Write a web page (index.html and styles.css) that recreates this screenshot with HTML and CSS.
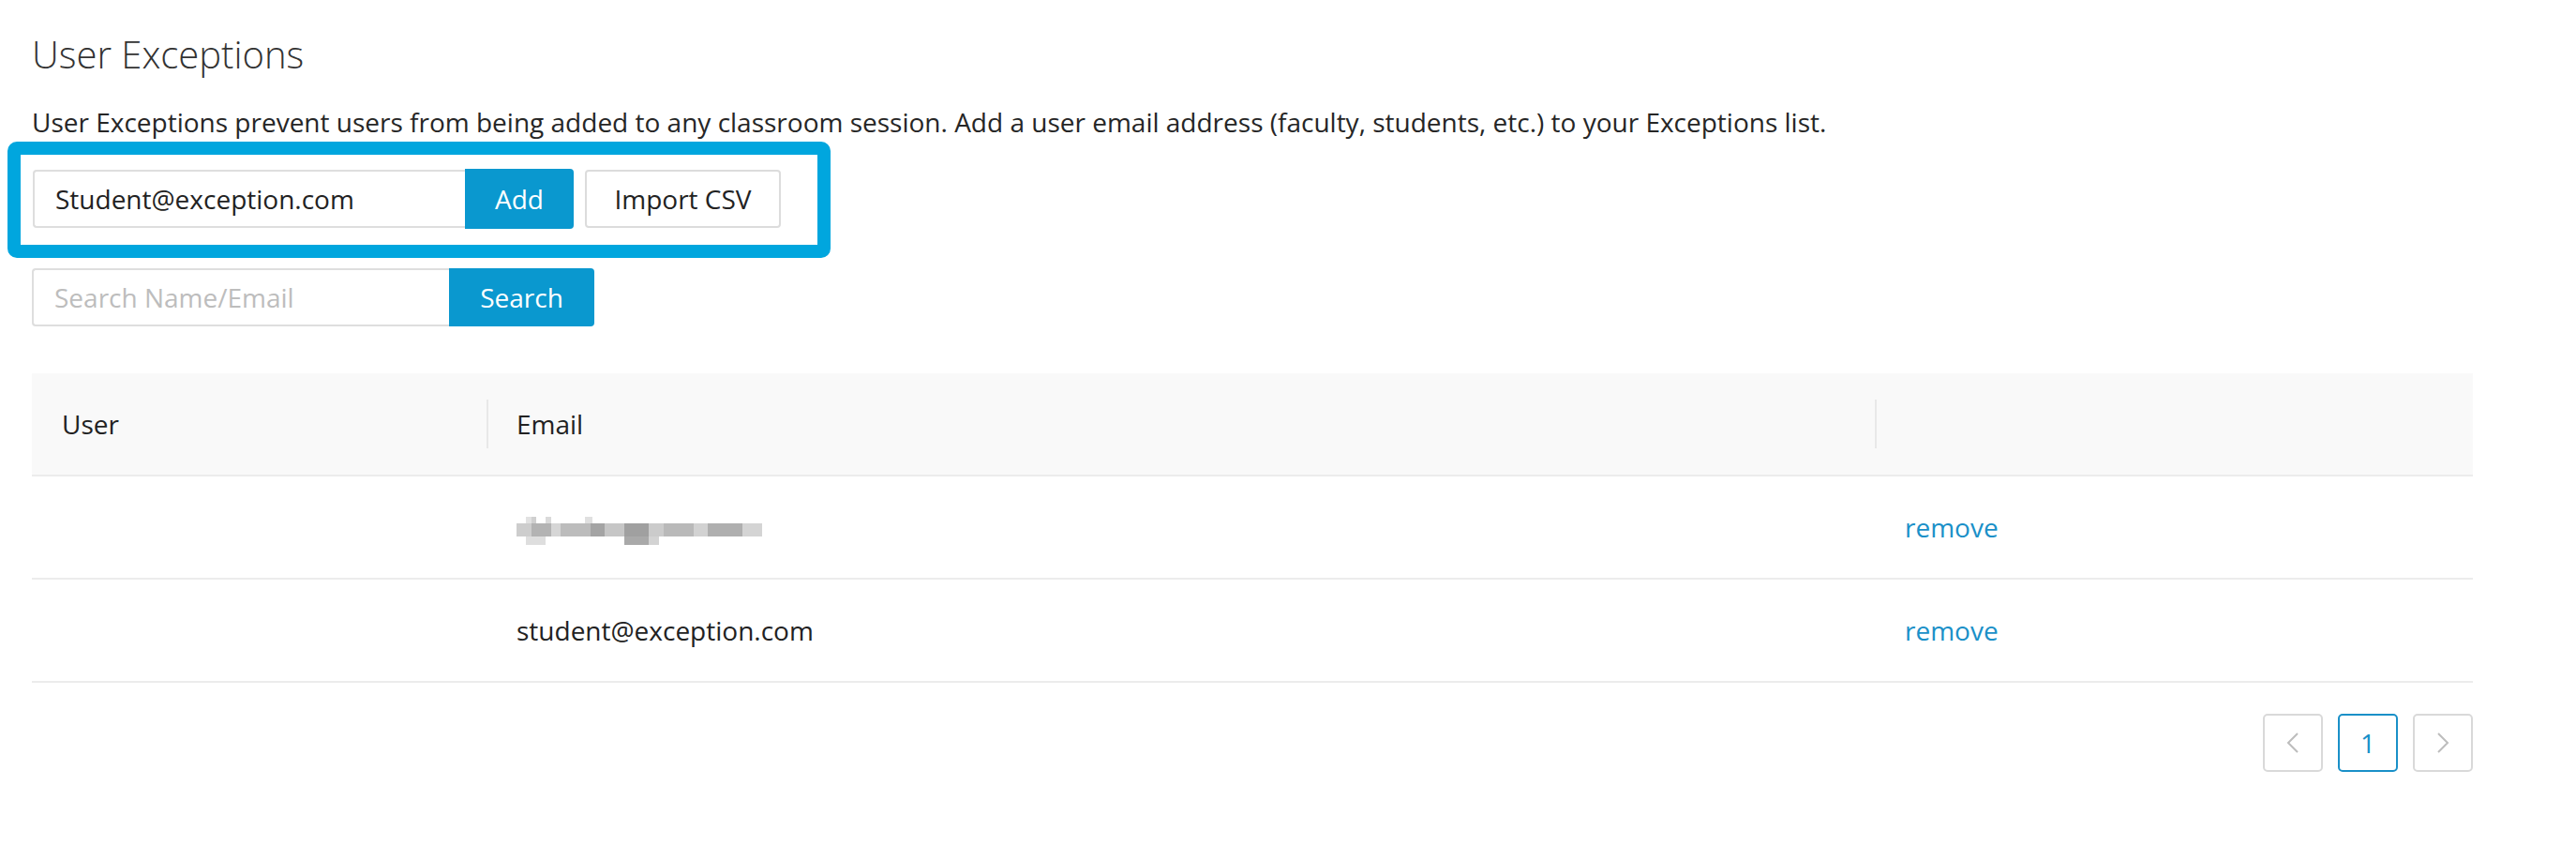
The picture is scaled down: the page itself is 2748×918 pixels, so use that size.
FILE: index.html
```html
<!DOCTYPE html>
<html lang="en">
<head>
  <meta charset="UTF-8" />
  <meta name="viewport" content="width=device-width, initial-scale=1.0"/>
  <title>User Exceptions</title>
  <link rel="stylesheet" href="styles.css">
</head>
<body>

<div class="page">
  <h2>User Exceptions</h2>
  <p class="intro">User Exceptions prevent users from being added to any classroom session. Add a user email address (faculty, students, etc.) to your Exceptions list.</p>

  <form class="add-box" id="addForm">
    <div class="input-group">
      <input type="email" name="email" class="add-input" value="Student@exception.com" />
      <button type="submit" class="btn-primary add-btn">Add</button>
    </div>
    <button type="button" class="btn-default">Import CSV</button>
  </form>

  <form class="search-row" id="searchForm">
    <div class="input-group">
      <input type="text" name="q" class="search-input" placeholder="Search Name/Email" />
      <button type="submit" class="btn-primary search-btn">Search</button>
    </div>
  </form>

  <table class="exceptions">
    <colgroup>
      <col class="col-user">
      <col class="col-email">
      <col>
    </colgroup>
    <thead>
      <tr>
        <th>User</th>
        <th>Email</th>
        <th></th>
      </tr>
    </thead>
    <tbody>
      <tr>
        <td></td>
        <td><span class="blurred" aria-label="hidden email"></span></td>
        <td><a href="#" class="remove">remove</a></td>
      </tr>
      <tr>
        <td></td>
        <td>student@exception.com</td>
        <td><a href="#" class="remove">remove</a></td>
      </tr>
    </tbody>
  </table>

  <ul class="pager">
    <li class="pager-item disabled">
      <svg width="16" height="24" viewBox="0 0 16 24"><polyline points="13,2 3,12 13,22" fill="none" stroke="#bdbdbd" stroke-width="2"/></svg>
    </li>
    <li class="pager-item active">1</li>
    <li class="pager-item">
      <svg width="16" height="24" viewBox="0 0 16 24"><polyline points="3,2 13,12 3,22" fill="none" stroke="#bdbdbd" stroke-width="2"/></svg>
    </li>
  </ul>
</div>

</body>
</html>
```

FILE: styles.css
```css
body {
  margin: 0;
  font-family: "Open Sans", "Noto Sans", Arial, sans-serif;
  font-size: 28px;
  color: #262626;
  background: #fff;
}

.page {
  padding: 0 110px 40px 34px;
}

h2 {
  margin: 30px 0 0;
  font-size: 40px;
  font-weight: 300;
  line-height: 56px;
  color: #333;
}

.intro {
  margin: 24px 0 0;
  line-height: 40px;
  color: #262626;
}

/* highlighted add row */
.add-box {
  display: flex;
  align-items: center;
  gap: 12px;
  width: fit-content;
  margin: 1px 0 0 -26px;
  padding: 15px 39px 17px 13px;
  border: 14px solid #00a6de;
  border-radius: 10px;
}

.input-group {
  display: flex;
  align-items: center;
}

.input-group input {
  box-sizing: border-box;
  height: 62px;
  margin: 0;
  padding: 0 22px;
  border: 2px solid #dedede;
  border-right: none;
  border-radius: 4px 0 0 4px;
  font: inherit;
  color: #222;
  outline: none;
}

.input-group input::placeholder {
  color: #bdbdbd;
}

.add-input {
  width: 461px;
}

.search-input {
  width: 445px;
}

.btn-primary {
  height: 64px;
  margin: 0;
  border: none;
  border-radius: 0 4px 4px 0;
  background: #0a98cf;
  color: #fff;
  font: inherit;
  cursor: pointer;
}

.add-btn {
  width: 116px;
}

.search-btn {
  width: 155px;
  height: 62px;
}

.btn-default {
  box-sizing: border-box;
  width: 209px;
  height: 62px;
  margin: 0;
  border: 2px solid #dcdcdc;
  border-radius: 4px;
  background: #fff;
  color: #222;
  font: inherit;
  cursor: pointer;
}

.search-row {
  margin-top: 11px;
}

/* table */
.exceptions {
  width: 100%;
  margin-top: 50px;
  border-collapse: separate;
  border-spacing: 0;
  table-layout: fixed;
}

.col-user {
  width: 485px;
}

.col-email {
  width: 1481px;
}

.exceptions th,
.exceptions td {
  padding: 34px 32px;
  line-height: 40px;
  text-align: left;
  border-bottom: 2px solid #ececec;
}

.exceptions th {
  position: relative;
  background: #f9f9f9;
  font-weight: normal;
  color: #222;
}

.exceptions th + th::before {
  content: "";
  position: absolute;
  left: 0;
  top: 28px;
  bottom: 28px;
  width: 2px;
  background: #e8e8e8;
}

.exceptions td {
  color: #222;
}

.remove {
  color: #1a90c8;
  text-decoration: none;
}

.blurred {
  display: inline-block;
  width: 262px;
  height: 30px;
  vertical-align: middle;
  background:
    linear-gradient(90deg, transparent 0 4%, #e2e2e2 4% 6%, #d0d0d0 6% 8%, transparent 8% 12%, #dadada 12% 14%, transparent 14% 28%, #e0e0e0 28% 31%, transparent 31% 100%) 0 0 / 100% 7px no-repeat,
    linear-gradient(90deg, #cdcdcd 0 6%, #b3b3b3 6% 14%, #d6d6d6 14% 18%, #bcbcbc 18% 30%, #a4a4a4 30% 36%, #c6c6c6 36% 44%, #a0a0a0 44% 54%, #cbcbcb 54% 60%, #b9b9b9 60% 72%, #d2d2d2 72% 78%, #afafaf 78% 92%, #d4d4d4 92% 100%) 0 7px / 100% 14px no-repeat,
    linear-gradient(90deg, transparent 0 4%, #dedede 4% 12%, transparent 12% 44%, #a9a9a9 44% 54%, #d3d3d3 54% 58%, transparent 58% 100%) 0 21px / 100% 9px no-repeat;
}

/* pagination */
.pager {
  display: flex;
  justify-content: flex-end;
  gap: 16px;
  margin: 33px 0 0;
  padding: 0;
  list-style: none;
}

.pager-item {
  box-sizing: border-box;
  display: flex;
  align-items: center;
  justify-content: center;
  width: 64px;
  height: 62px;
  border: 2px solid #d9d9d9;
  border-radius: 5px;
  color: #1a90c8;
  cursor: pointer;
}

.pager-item.active {
  border-color: #1a90c8;
}
```
